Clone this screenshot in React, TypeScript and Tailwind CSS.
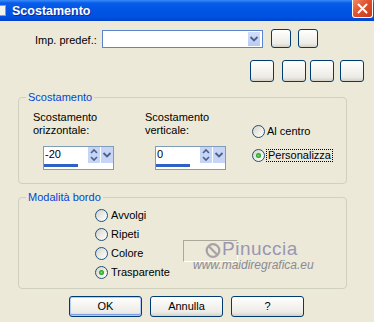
import React from 'react';

const xpBtn =
  'rounded-[3px] border border-[#003C74] bg-[linear-gradient(180deg,#FFFFFF_0%,#F6F5F1_40%,#ECEBE6_80%,#D6D0C5_100%)]';

function Radio({ checked }: { checked?: boolean }) {
  return (
    <span className="flex h-[13px] w-[13px] shrink-0 items-center justify-center rounded-full border border-[#1C5180] bg-[linear-gradient(135deg,#D4D1C6_0%,#ECEBE4_50%,#FFFFFF_100%)]">
      {checked && (
        <span className="h-[5px] w-[5px] rounded-full bg-[radial-gradient(circle,#6BE06B_0%,#21A121_65%,#1A8A1A_100%)]" />
      )}
    </span>
  );
}

function SpinBox({ value }: { value: string }) {
  return (
    <div className="flex h-[24px] w-[71px] flex-col border border-[#7F9DB9] bg-white">
      <div className="flex h-[16px]">
        <span className="flex-1 pl-[1px] leading-[14px]">{value}</span>
        <svg width="12" height="16" viewBox="0 0 12 16" className="bg-[#C6D4F7]">
          <path d="M3 6 L6 3 L9 6" fill="none" stroke="#4D6185" strokeWidth="1.6" />
          <path d="M3 10 L6 13 L9 10" fill="none" stroke="#4D6185" strokeWidth="1.6" />
        </svg>
        <svg width="12" height="16" viewBox="0 0 12 16" className="ml-[1px] bg-[#C6D4F7]">
          <path d="M2.5 6 L6 9.5 L9.5 6" fill="none" stroke="#4D6185" strokeWidth="1.8" />
        </svg>
      </div>
      <div className="mt-[1px] h-[3px] w-[34px] bg-[#2F60C6]" />
    </div>
  );
}

export default function App() {
  return (
    <div className="relative h-[322px] w-[374px] overflow-hidden bg-[#ECE9D8] font-['Liberation_Sans',Arial,sans-serif] text-[11px] leading-[13px] text-black">
      {/* Title bar */}
      <div className="flex h-[21px] items-center bg-[linear-gradient(180deg,#3B8CF8_0%,#0A5DEB_14%,#0055E5_45%,#0052E0_80%,#0043CC_100%)]">
        <div className="h-[11px] w-[6px] border-y border-r border-[#9A9A9A] bg-[#F4F2EA]" />
        <span className="ml-[6px] text-[12.5px] font-bold leading-[14px] text-white [text-shadow:1px_1px_0_#0A2A9A]">
          Scostamento
        </span>
        <div className="ml-auto mr-[1px] flex h-[18px] w-[21px] items-center justify-center self-start rounded-b-[3px] border-x border-b border-white bg-[linear-gradient(135deg,#F08A6A_0%,#E0522E_45%,#C83A18_100%)]">
          <svg width="11" height="11" viewBox="0 0 11 11">
            <path d="M1.5 1.5 L9.5 9.5 M9.5 1.5 L1.5 9.5" stroke="white" strokeWidth="2" strokeLinecap="round" />
          </svg>
        </div>
      </div>

      {/* Preset row */}
      <div className="mt-[8px] flex h-[19px] items-center">
        <span className="ml-[35px] w-[62px] pt-[3px] whitespace-nowrap">Imp. predef.:</span>
        <div className="ml-[5px] flex h-[18px] w-[161px] items-center justify-end border border-[#5A84CF] bg-white pr-[2px]">
          <svg width="12" height="14" viewBox="0 0 12 14" className="bg-[linear-gradient(180deg,#D2DEFC,#B7C9F6)]">
            <path d="M2.5 5 L6 8.5 L9.5 5" fill="none" stroke="#4D6185" strokeWidth="1.8" />
          </svg>
        </div>
        <div className={`ml-[8px] h-[19px] w-[20px] ${xpBtn}`} />
        <div className={`ml-[7px] h-[19px] w-[20px] ${xpBtn}`} />
      </div>

      <div className="mt-[12px] flex h-[22px]">
        <div className={`ml-[250px] w-[24px] ${xpBtn}`} />
        <div className={`ml-[8px] w-[24px] ${xpBtn}`} />
        <div className={`ml-[4px] w-[24px] ${xpBtn}`} />
        <div className={`ml-[6px] w-[24px] ${xpBtn}`} />
      </div>

      {/* Scostamento group */}
      <div className="relative ml-[18px] mt-[15px] flex h-[87px] w-[329px] rounded-[4px] border border-[#D0D0BF]">
        <span className="absolute left-[7px] top-[-7px] bg-[#ECE9D8] px-[2px] text-[#0046D5]">Scostamento</span>
        <div className="ml-[14px] w-[112px] pt-[13px]">
          <div>Scostamento<br />orizzontale:</div>
          <div className="ml-[10px] mt-[9px]">
            <SpinBox value="-20" />
          </div>
        </div>
        <div className="w-[107px] pt-[13px]">
          <div>Scostamento<br />verticale:</div>
          <div className="ml-[10px] mt-[9px]">
            <SpinBox value="0" />
          </div>
        </div>
        <div className="flex flex-col pt-[27px]">
          <div className="flex h-[13px] items-center">
            <Radio />
            <span className="ml-[2px]">Al centro</span>
          </div>
          <div className="mt-[11px] flex h-[13px] items-center">
            <Radio checked />
            <span className="ml-[1px] border border-dotted border-black px-[1px] leading-[11px]">Personalizza</span>
          </div>
        </div>
      </div>

      {/* Modalità bordo group */}
      <div className="relative ml-[18px] mt-[13px] flex h-[92px] w-[329px] rounded-[4px] border border-[#D0D0BF]">
        <span className="absolute left-[7px] top-[-7px] bg-[#ECE9D8] px-[2px] text-[#0046D5]">Modalità bordo</span>
        <div className="ml-[76px] w-[88px] pt-[8px]">
          {['Avvolgi', 'Ripeti', 'Colore', 'Trasparente'].map((t) => (
            <div key={t} className="flex h-[19px] items-center">
              <Radio checked={t === 'Trasparente'} />
              <span className="ml-[3px]">{t}</span>
            </div>
          ))}
        </div>
        <div className="mt-[42px] h-[22px] w-[55px] border-l border-t border-b border-r border-l-[#ACA899] border-t-[#ACA899] border-b-white border-r-white" />
      </div>

      {/* Buttons */}
      <div className="ml-[69px] mt-[7px] flex h-[21px] gap-[8px]">
        <div className={`flex w-[73px] items-center justify-center ${xpBtn} shadow-[inset_0_0_0_1px_#B4CCF4,inset_0_-1px_0_1px_#7D9CE8]`}>OK</div>
        <div className={`flex w-[73px] items-center justify-center ${xpBtn}`}>Annulla</div>
        <div className={`flex w-[73px] items-center justify-center ${xpBtn}`}>?</div>
      </div>

      {/* Watermark overlay */}
      <div className="pointer-events-none absolute left-[193px] top-[240px]">
        <div className="ml-[12px] flex items-start">
          <svg width="16" height="17" viewBox="0 0 16 17" className="mt-[2px]">
            <circle cx="8" cy="8.5" r="6.3" fill="none" stroke="#A6A2A8" strokeWidth="2.2" />
            <path d="M3.8 4.3 L12.2 12.7" stroke="#A6A2A8" strokeWidth="2.2" />
          </svg>
          <span className="ml-[1px] text-[19px] leading-[18px] tracking-[0.5px] text-[#9A96B4]">
            Pinuccia
          </span>
        </div>
        <div className="mt-[1px] text-[12px] italic leading-[11px] text-[#8A8994]">www.maidiregrafica.eu</div>
      </div>
    </div>
  );
}
